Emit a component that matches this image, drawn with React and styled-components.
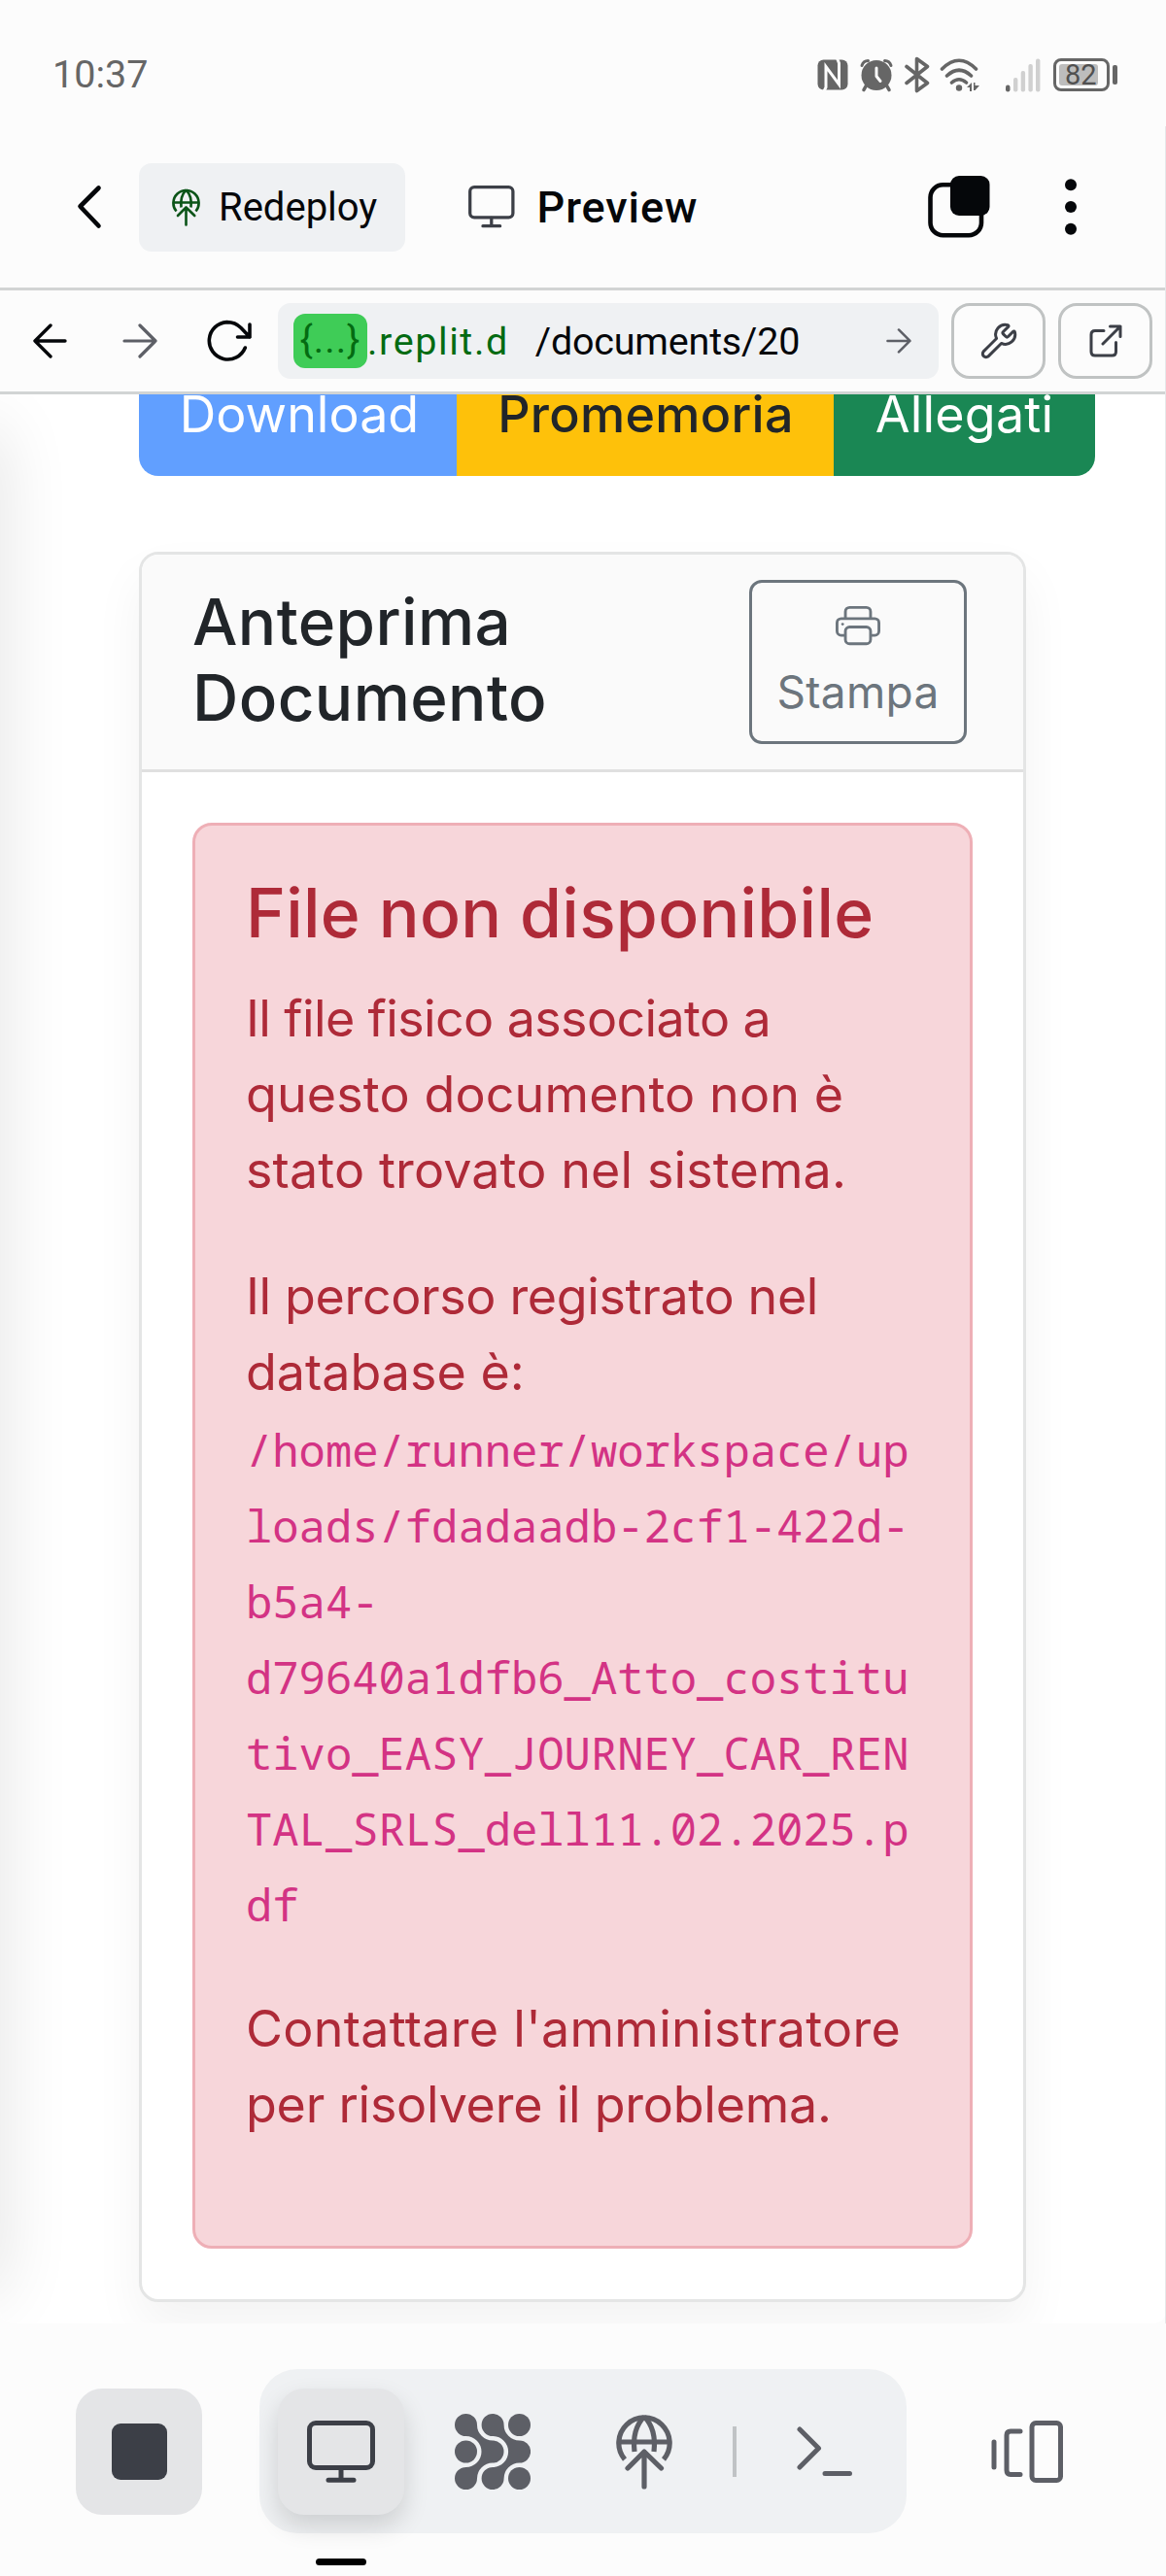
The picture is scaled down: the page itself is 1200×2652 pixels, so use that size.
import React from "react";
import styled, { createGlobalStyle, css } from "styled-components";
import { Wrench } from "lucide-react";
import { BsPrinter } from "react-icons/bs";

const UI = `Roboto, "Liberation Sans", sans-serif`;
const PAGE = `Inter, "Liberation Sans", sans-serif`;

const Global = createGlobalStyle`
  * { box-sizing: border-box; }
  body { margin: 0; background: #fcfcfc; }
  button { font: inherit; color: inherit; border: 0; background: none; padding: 0; margin: 0; }
`;

const Screen = styled.div`
  position: relative;
  width: 1200px;
  height: 2652px;
  display: flex;
  flex-direction: column;
  overflow: hidden;
  background: #fcfcfc;
  font-family: ${UI};
`;

/* ---------- icons ---------- */

const Svg = styled.svg`
  display: block;
  flex: none;
  fill: none;
  stroke: ${(p) => p.$color || "#5d5f66"};
  stroke-width: ${(p) => p.$weight || 5};
  stroke-linecap: round;
  stroke-linejoin: round;
`;

function Icon({ w, h, color, weight, children }) {
  return (
    <Svg width={w} height={h} viewBox={`0 0 ${w} ${h}`} $color={color} $weight={weight} aria-hidden="true">
      {children}
    </Svg>
  );
}

const NfcIcon = () => (
  <Icon w={32} h={36} color="none">
    <rect x="0.5" y="2.5" width="31" height="31" rx="6" fill="#666" />
    <path d="M7 35 L9 31 V9.5 L22.5 28 V6 L20.5 1" stroke="#fcfcfc" strokeWidth="3" strokeLinejoin="miter" />
  </Icon>
);

const AlarmIcon = () => (
  <Icon w={34} h={36} color="#666" weight={3.6}>
    <circle cx="17" cy="18.5" r="15.5" fill="#666" stroke="none" />
    <path d="M2 8.5 Q3.5 3.5 8.5 3.5 M32 8.5 Q30.5 3.5 25.5 3.5" strokeWidth="3" />
    <path d="M6.5 29 L4 33.5 M27.5 29 L30 33.5" />
    <path d="M17 11 V19.5 L21 24.5" stroke="#fcfcfc" strokeWidth="3" />
  </Icon>
);

const BluetoothIcon = () => (
  <Icon w={26} h={38} color="#666" weight={3.6}>
    <path d="M2 10.5 L23.5 27.5 L12.5 35.5 V2.5 L23.5 10.5 L2 27.5" />
  </Icon>
);

const WifiIcon = () => (
  <Icon w={42} h={36} color="#666" weight={3.6}>
    <path d="M2.5 12 Q20 -5.5 37.5 12 M7.5 19 Q20 7.5 32.5 19 M12.5 26 Q20 19.5 27.5 26" />
    <circle cx="20" cy="31.5" r="3.2" fill="#666" stroke="none" />
    <path d="M28 31 L33 26 V35 H31 V31 Z M35 26 H36.5 V29 H41 L36.5 34 H35 Z" fill="#666" stroke="none" />
  </Icon>
);

const SignalIcon = () => (
  <Icon w={36} h={36} color="none">
    <rect x="0" y="28.5" width="4.5" height="7" rx="2.2" fill="#666" />
    {[[8, 21], [15.7, 14], [23.4, 7], [31, 1.5]].map(([x, y]) => (
      <rect key={x} x={x} y={y} width="4.4" height={35.5 - y} rx="2" fill="#d0d0d0" />
    ))}
  </Icon>
);

const BackIcon = () => (
  <Icon w={26} h={46} color="#05070a" weight={4.6}>
    <path d="M22.5 3.5 L3.5 22.5 L22.5 42.5" />
  </Icon>
);

const DeployIcon = ({ size = 1, color }) => (
  <Svg width={58 * size} height={78 * size} viewBox="0 0 58 78" $color={color} $weight={5.2} aria-hidden="true">
    <path d="M9 47 A26.2 26.2 0 1 1 49 47" strokeLinecap="butt" />
    <path d="M3 29 H55 M29 3 C19 13 17.5 26 19 39 M29 3 C39 13 40.5 26 39 39" strokeLinecap="butt" />
    <path d="M29 75 V39 M12 56 L29 39 L46.5 56" />
  </Svg>
);

const MonitorIcon = ({ size = 1, weight = 5 }) => (
  <Svg width={70 * size} height={64 * size} viewBox="0 0 70 64" $color="#3c3f47" $weight={weight} aria-hidden="true">
    <rect x="2.5" y="2.5" width="65" height="46" rx="6.5" />
    <path d="M35 49 V61 M22 61.3 H48" />
  </Svg>
);

const OverlapIcon = () => (
  <Icon w={64} h={64} color="#05070a" weight={4.6}>
    <rect x="2.5" y="9.3" width="52.5" height="52" rx="13" />
    <rect x="23" y="0" width="40.5" height="41" rx="9" fill="#05070a" stroke="none" />
  </Icon>
);

const MoreIcon = () => (
  <Icon w={12} h={58} color="none">
    {[6.3, 29, 51.7].map((y) => (
      <circle key={y} cx="6" cy={y} r="6" fill="#05070a" />
    ))}
  </Icon>
);

const ArrowIcon = ({ flip, size = 1, color, weight }) => (
  <Svg width={36 * size} height={36 * size} viewBox="0 0 36 36" $color={color} $weight={weight} aria-hidden="true">
    <path d={flip ? "M33 18 H2 M18 2 L2 18 L18 34" : "M2 18 H34 M18 2 L34 18 L18 34"} />
  </Svg>
);

const RefreshIcon = () => (
  <Icon w={48} h={44} color="#05070a" weight={3.6}>
    <path d="M45 18 L36 8.5 C31.5 4 26.5 2.6 21.5 2.6 A19.2 19.2 0 1 0 40.3 29 M45 5 V18 H32.5" />
  </Icon>
);

const OpenIcon = () => (
  <Icon w={34} h={34} color="#3c3f47" weight={3}>
    <path d="M15 6.5 H6 Q2 6.5 2 10.5 V28 Q2 32 6 32 H23.5 Q27.5 32 27.5 28 V18.5 M14 20 L32 2 M21.5 2 H32 V12.5" />
  </Icon>
);

const AgentIcon = () => {
  const chevron =
    "M11.5 0 A11.5 11.5 0 0 1 23 11.5 A16 16 0 0 0 39 27.5 A11.5 11.5 0 0 1 39 50.5 A16 16 0 0 0 23 66.5 A11.5 11.5 0 1 1 11.5 55 A16 16 0 0 0 11.5 23 A11.5 11.5 0 0 1 11.5 0 Z";
  return (
    <Svg width="78" height="78" viewBox="0 0 78 78" $color="none" aria-hidden="true">
      <g fill="#5d5f66">
        <path d={chevron} />
        <path d={chevron} transform="translate(27.6 0)" />
        <circle cx="11.5" cy="39" r="11.5" />
        <circle cx="66.5" cy="11.5" r="11.5" />
        <circle cx="66.5" cy="66.5" r="11.5" />
      </g>
    </Svg>
  );
};

const TerminalIcon = () => (
  <Icon w={58} h={52}>
    <path d="M3 3 L22.5 22.5 L3 42 M29 48.5 H54.5" />
  </Icon>
);

const TabsIcon = () => (
  <Icon w={76} h={64}>
    <rect x="42" y="2.5" width="29.5" height="59" rx="4" />
    <path d="M30 11 H20 Q16 11 16 15 V51 Q16 55.5 20 55.5 H30 M3 22 V48" />
  </Icon>
);

/* ---------- status bar ---------- */

const StatusBar = styled.div`
  height: 130px;
  padding: 23px 50px 0 54px;
  display: flex;
  justify-content: space-between;
  align-items: flex-start;
  color: #666;
`;
const Clock = styled.div`
  font-size: 39.5px;
  line-height: 108px;
`;
const StatusIcons = styled.div`
  height: 108px;
  display: flex;
  align-items: center;
`;
const Slot = styled.div`
  margin-left: ${(p) => p.$gap}px;
`;
const Battery = styled.div`
  display: flex;
  align-items: center;
  gap: 3px;
  margin-left: 13px;
  &::after {
    content: "";
    width: 5px;
    height: 20px;
    border-radius: 2px;
    background: #666;
  }
`;
const BatteryBody = styled.div`
  width: 58px;
  height: 34px;
  padding: 3px;
  border: 3.5px solid #666;
  border-radius: 8px;
`;
const Charge = styled.div`
  width: 40px;
  height: 22px;
  padding-left: 6px;
  border-radius: 3px;
  background: #bdbdbd;
  color: #505050;
  font-size: 29px;
  line-height: 22px;
  white-space: nowrap;
`;

/* ---------- app toolbar ---------- */

const Toolbar = styled.div`
  height: 169px;
  padding: 0 92px 0 79px;
  display: flex;
  align-items: center;
  border-bottom: 3px solid #d2d4d4;
`;
const RedeployButton = styled.button`
  display: flex;
  align-items: center;
  gap: 19px;
  width: 274px;
  height: 91px;
  margin: 0 65px 0 38px;
  padding-left: 34px;
  border-radius: 13px;
  background: #eff1f3;
  color: #05070a;
  font-size: 40px;
`;
const Title = styled.h1`
  flex: 1;
  margin: 2px 0 0 23px;
  color: #05070a;
  font-size: 45px;
  line-height: 1.2;
  font-weight: 500;
  letter-spacing: 0.9px;
`;
const MenuSlot = styled.div`
  margin: 0 0 0 77px;
`;

/* ---------- address bar ---------- */

const AddressBar = styled.div`
  height: 107px;
  padding: 0 14px 0 34px;
  display: flex;
  align-items: center;
  border-bottom: 3px solid #d1d4d4;
`;
const NavIcons = styled.div`
  display: flex;
  align-items: center;
  width: 252px;
  gap: 56px;
  & > :last-child { margin-left: -6px; }
`;
const UrlField = styled.div`
  display: flex;
  align-items: center;
  width: 680px;
  height: 78px;
  padding: 0 28px 0 16px;
  border-radius: 13px;
  background: #eff1f3;
  color: #05070a;
  font-size: 39.5px;
`;
const Domain = styled.span`
  display: flex;
  align-items: center;
  color: #046b12;
`;
const Ellipsis = styled.span`
  width: 76px;
  height: 56px;
  border-radius: 12px;
  background: #3fcc57;
  text-align: center;
  line-height: 54px;
  letter-spacing: 1px;
`;
const Host = styled.span`
  letter-spacing: 1.6px;
`;
const Path = styled.span`
  flex: 1;
  margin-left: 27px;
  letter-spacing: -0.2px;
`;
const SquareButton = styled.button`
  display: flex;
  align-items: center;
  justify-content: center;
  width: 97px;
  height: 78px;
  margin-left: 13px;
  border: 3px solid #c0c3c3;
  border-radius: 19px;
`;

/* ---------- previewed page ---------- */

const Viewport = styled.main`
  position: relative;
  height: 1986px;
  padding: 0 0 0 143px;
  overflow: hidden;
  border-radius: 0 0 13px 13px;
  background: #fff;
  font-family: ${PAGE};
  font-size: 52px;
  line-height: 78px;
  &::before {
    content: "";
    position: absolute;
    left: -60px;
    top: 36px;
    width: 60px;
    height: 1920px;
    box-shadow: 0 0 72px rgba(0, 0, 0, 0.12);
  }
`;
const ButtonGroup = styled.div`
  display: flex;
  align-items: flex-end;
  width: 984px;
  height: 84px;
  overflow: hidden;
  border-radius: 0 0 20px 20px;
`;
const tones = {
  blue: css`background: #619fff; color: #fff;`,
  amber: css`background: #fec10a; color: #212529; font-weight: 500;`,
  green: css`background: #1a8754; color: #fff;`,
};
const GroupButton = styled.button`
  flex: none;
  width: ${(p) => p.$w}px;
  padding: 23px 0 24px ${(p) => p.$inset || 0}px;
  text-align: center;
  letter-spacing: ${(p) => p.$track || 0}px;
  ${(p) => tones[p.$tone]}
`;
const Card = styled.section`
  width: 913px;
  margin-top: 78px;
  border: 3px solid #e4e5e5;
  border-radius: 20px;
  background: #fff;
  box-shadow: 0 26px 52px rgba(0, 0, 0, 0.05);
`;
const CardHeader = styled.header`
  display: flex;
  justify-content: space-between;
  align-items: flex-start;
  padding: 26px 58px 26px 52px;
  border-bottom: 3px solid #e0e0e0;
  border-radius: 17px 17px 0 0;
  background: #fafafa;
`;
const CardTitle = styled.h5`
  width: 400px;
  margin: 5px 0 0;
  color: #212529;
  font-size: 65.5px;
  font-weight: 500;
  line-height: 78px;
  letter-spacing: 0.4px;
`;
const PrintButton = styled.button`
  display: flex;
  flex-direction: column;
  align-items: center;
  gap: 11px;
  width: 224px;
  height: 169px;
  padding-top: 21px;
  border: 3px solid #6c757d;
  border-radius: 13px;
  color: #6c757d;
  font-size: 46px;
  line-height: 68px;
  letter-spacing: 0.3px;
`;
const CardBody = styled.div`
  padding: 52px 49px 52px 52px;
`;
const Alert = styled.div`
  width: 803px;
  height: 1468px;
  padding: 48px 52px;
  border: 3px solid #eeafb6;
  border-radius: 20px;
  background: #f7d6da;
  color: #ae2a38;
`;
const AlertTitle = styled.h4`
  margin: 0 0 28px;
  font-size: 69.6px;
  font-weight: 500;
  line-height: 84px;
  letter-spacing: 0.25px;
  white-space: nowrap;
`;
const Paragraph = styled.p`
  margin: 0 0 52px;
`;
const Phrase = styled.span`
  letter-spacing: ${(p) => p.$track}px;
`;
const FilePath = styled.code`
  display: block;
  height: 546px;
  padding-top: 1px;
  color: #d33384;
  font-family: "Noto Sans Mono", "DejaVu Sans Mono", monospace;
  font-size: 45.5px;
  overflow-wrap: anywhere;
`;

/* ---------- bottom dock ---------- */

const Dock = styled.nav`
  display: flex;
  align-items: flex-start;
  height: 260px;
  padding: 47px 0 0 78px;
`;
const DockTile = styled.button`
  position: relative;
  display: flex;
  align-items: center;
  justify-content: center;
  width: 130px;
  height: 130px;
  margin-top: 20px;
  border-radius: 27px;
  background: #e4e5e7;
  box-shadow: ${(p) => (p.$active ? "0 12px 26px rgba(0, 0, 0, 0.14)" : "none")};
`;
const ActiveMark = styled.span`
  position: absolute;
  left: 39px;
  top: 175px;
  width: 52px;
  height: 7px;
  border-radius: 4px;
  background: #000;
`;
const StopSquare = styled.span`
  width: 57px;
  height: 58px;
  border-radius: 9px;
  background: #3c3f47;
`;
const DockGroup = styled.div`
  display: flex;
  align-items: flex-start;
  width: 666px;
  height: 169px;
  margin: 0 87px 0 59px;
  padding-left: 19px;
  border-radius: 39px;
  background: #eff1f3;
`;
const DockIcon = styled.div`
  display: flex;
  align-items: center;
  justify-content: center;
  height: 169px;
  margin-left: ${(p) => p.$gap || 0}px;
`;
const Divider = styled.span`
  width: 4px;
  height: 52px;
  margin: 59px 0 0 62px;
  background: #c0c3c5;
`;
const FrameEdge = styled.div`
  position: absolute;
  right: 0;
  top: 130px;
  width: 1px;
  height: 2262px;
  background: #e6e8ea;
`;

export default function App() {
  return (
    <Screen>
      <Global />
      <StatusBar>
        <Clock>10:37</Clock>
        <StatusIcons>
          <NfcIcon />
          <Slot $gap={12}><AlarmIcon /></Slot>
          <Slot $gap={12}><BluetoothIcon /></Slot>
          <Slot $gap={10}><WifiIcon /></Slot>
          <Slot $gap={26}><SignalIcon /></Slot>
          <Battery>
            <BatteryBody><Charge>82</Charge></BatteryBody>
          </Battery>
        </StatusIcons>
      </StatusBar>

      <Toolbar>
        <BackIcon />
        <RedeployButton>
          <DeployIcon size={0.5} color="#0b5418" />
          Redeploy
        </RedeployButton>
        <MonitorIcon size={0.68} weight={4.8} />
        <Title>Preview</Title>
        <OverlapIcon />
        <MenuSlot><MoreIcon /></MenuSlot>
      </Toolbar>

      <AddressBar>
        <NavIcons>
          <ArrowIcon flip color="#05070a" weight={3.4} />
          <ArrowIcon color="#5d5f66" weight={3.2} />
          <RefreshIcon />
        </NavIcons>
        <UrlField>
          <Domain>
            <Ellipsis>{"{...}"}</Ellipsis>
            <Host>.replit.d</Host>
          </Domain>
          <Path>/documents/20</Path>
          <ArrowIcon size={0.72} color="#5d5f66" weight={3.4} />
        </UrlField>
        <SquareButton><Wrench size={40} strokeWidth={1.8} color="#3c3f47" /></SquareButton>
        <SquareButton><OpenIcon /></SquareButton>
      </AddressBar>

      <Viewport>
        <ButtonGroup>
          <GroupButton $w={327} $tone="blue" $inset={3}>Download</GroupButton>
          <GroupButton $w={388} $tone="amber" $inset={1} $track={0.3}>Promemoria</GroupButton>
          <GroupButton $w={269} $tone="green" $track={0.2}>Allegati</GroupButton>
        </ButtonGroup>
        <Card>
          <CardHeader>
            <CardTitle>Anteprima Documento</CardTitle>
            <PrintButton>
              <BsPrinter size={46} />
              Stampa
            </PrintButton>
          </CardHeader>
          <CardBody>
            <Alert>
              <AlertTitle>File non disponibile</AlertTitle>
              <Paragraph>
                <Phrase $track={-0.62}>Il file fisico associato a </Phrase>
                <Phrase $track={0.12}>questo documento non è stato trovato nel sistema.</Phrase>
              </Paragraph>
              <Paragraph>
                <Phrase $track={-0.36}>Il percorso registrato nel </Phrase>
                <Phrase $track={0}>database è:</Phrase>
                <FilePath>
                  /home/runner/workspace/uploads/fdadaadb-2cf1-422d-b5a4-d79640a1dfb6_Atto_costitutivo_EASY_JOURNEY_CAR_RENTAL_SRLS_dell11.02.2025.pdf
                </FilePath>
              </Paragraph>
              <Paragraph>
                <Phrase $track={0.28}>Contattare l'amministratore </Phrase>
                <Phrase $track={-0.24}>per risolvere il problema.</Phrase>
              </Paragraph>
            </Alert>
          </CardBody>
        </Card>
      </Viewport>

      <Dock>
        <DockTile><StopSquare /></DockTile>
        <DockGroup>
          <DockTile $active>
            <MonitorIcon />
            <ActiveMark />
          </DockTile>
          <DockIcon $gap={52}><AgentIcon /></DockIcon>
          <DockIcon $gap={88}><DeployIcon /></DockIcon>
          <Divider />
          <DockIcon $gap={62}><TerminalIcon /></DockIcon>
        </DockGroup>
        <DockIcon><TabsIcon /></DockIcon>
      </Dock>
      <FrameEdge />
    </Screen>
  );
}
